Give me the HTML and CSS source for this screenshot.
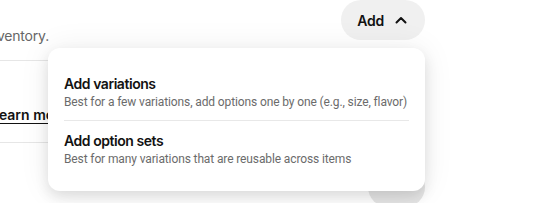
FILE: index.html
```html
<!DOCTYPE html>
<html lang="en">
<head>
    <meta charset="UTF-8">
    <meta name="viewport" content="width=device-width, initial-scale=1.0">
    <title>Item variations</title>
    <link rel="stylesheet" href="styles.css">
</head>
<body>
    <div class="page">
        <!-- Section header -->
        <div class="head">
            <div class="intro">
                <div class="intro-text">Sell this item in different sizes and colors, and track inventory.</div>
            </div>
            <div class="add-wrap">
                <button class="add-btn">
                    Add
                    <svg class="chevron" width="14" height="14" viewBox="0 0 14 14" fill="none">
                        <path d="M2.5 9.5L7 5L11.5 9.5" stroke="#121212" stroke-width="2" stroke-linecap="round" stroke-linejoin="round"/>
                    </svg>
                </button>

                <!-- Dropdown menu -->
                <div class="menu">
                    <div class="menu-item">
                        <div class="menu-title">Add variations</div>
                        <div class="menu-sub">Best for a few variations, add options one by one (e.g., size, flavor)</div>
                    </div>
                    <div class="menu-item">
                        <div class="menu-title">Add option sets</div>
                        <div class="menu-sub">Best for many variations that are reusable across items</div>
                    </div>
                </div>
            </div>
        </div>

        <div class="row">
            <a class="learn" href="#">Learn more</a>
        </div>

        <div class="row row-last">
            <span class="ghost-btn"></span>
        </div>
    </div>
</body>
</html>
```

FILE: styles.css
```css
* {
    margin: 0;
    padding: 0;
    box-sizing: border-box;
}

body {
    font-family: Inter, 'Noto Sans', sans-serif;
    background: #ffffff;
    color: #121212;
    overflow: hidden;
}

.page {
    width: 425px;
}

/* Header */
.head {
    display: flex;
    justify-content: space-between;
    align-items: flex-start;
    height: 61px;
    border-bottom: 1px solid #e6e6e6;
}

.intro {
    width: 49px;
    padding-top: 26px;
    display: flex;
    flex-direction: column;
    align-items: flex-end;
    white-space: nowrap;
}

.intro-text {
    font-size: 14px;
    line-height: 20px;
    color: #666666;
    letter-spacing: -0.2px;
}

.add-wrap {
    position: relative;
}

.add-btn {
    display: flex;
    align-items: center;
    gap: 10px;
    height: 40px;
    padding: 0 17px 0 16px;
    border: none;
    border-radius: 20px;
    background: #f0f0f0;
    font-family: inherit;
    font-size: 14px;
    font-weight: 600;
    color: #121212;
    letter-spacing: -0.2px;
}

/* Menu */
.menu {
    position: absolute;
    top: 48px;
    right: 0;
    width: 377px;
    padding: 16px 16px 14px;
    background: #ffffff;
    border-radius: 12px;
    box-shadow: 0 6px 14px rgba(0, 0, 0, 0.11), 0 0 32px rgba(0, 0, 0, 0.07);
    z-index: 10;
}

.menu-item {
    padding: 10px 0;
}

.menu-item + .menu-item {
    border-top: 1px solid #e8e8e8;
}

.menu-title {
    font-size: 14px;
    font-weight: 600;
    line-height: 20px;
    letter-spacing: -0.45px;
}

.menu-sub {
    font-family: Roboto, sans-serif;
    font-size: 12px;
    line-height: 16px;
    color: #6b6b6b;
    letter-spacing: -0.12px;
    white-space: nowrap;
}

/* Rows behind the menu */
.row {
    height: 82px;
    border-bottom: 1px solid #e6e6e6;
    padding-top: 43px;
}

.learn {
    display: inline-block;
    margin-left: -9px;
    font-size: 14px;
    font-weight: 600;
    line-height: 20px;
    color: #121212;
    text-decoration: underline;
    text-underline-offset: 3px;
}

.row-last {
    height: auto;
    border: none;
    display: flex;
    justify-content: flex-end;
    padding-top: 24px;
}

.ghost-btn {
    width: 57px;
    height: 40px;
    border-radius: 20px;
    background: #e6e6e6;
}
```
